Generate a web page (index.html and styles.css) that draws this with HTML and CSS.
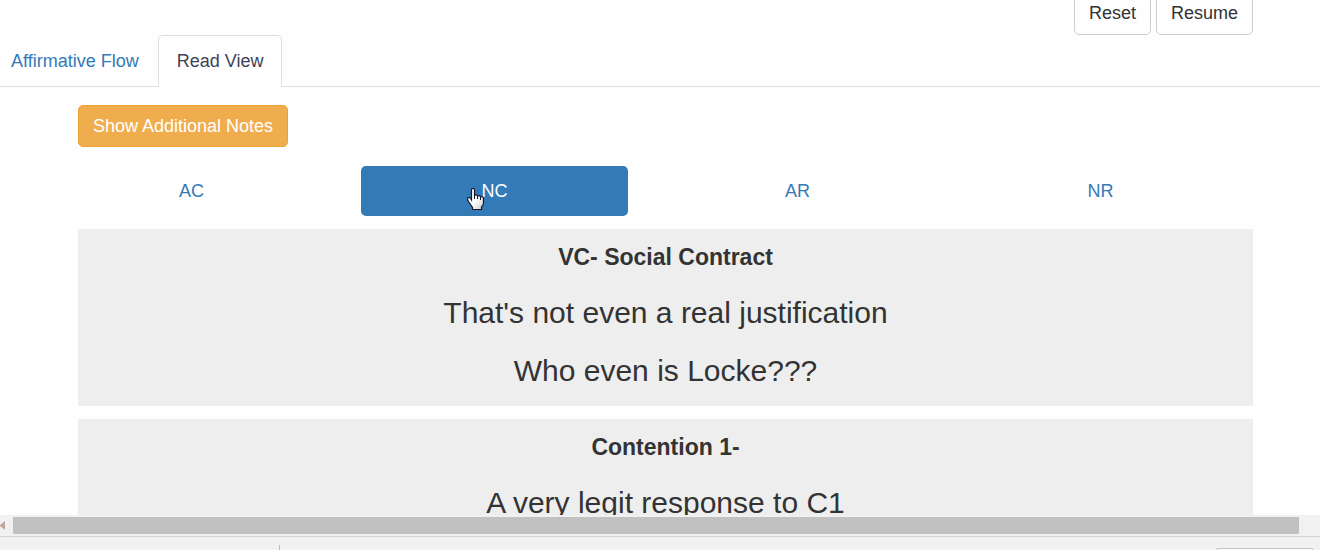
FILE: index.html
```html
<!DOCTYPE html>
<html lang="en">
<head>
<meta charset="utf-8">
<title>Read View</title>
<link rel="stylesheet" href="styles.css">
</head>
<body>
<main class="page">
  <div class="toolbar">
    <button class="btn btn-default" type="button">Reset</button>
    <button class="btn btn-default" type="button">Resume</button>
  </div>
  <nav class="tabs">
    <a class="tab tab-first" href="#flow">Affirmative Flow</a>
    <a class="tab tab-active" href="#read">Read View</a>
  </nav>
  <div class="actions">
    <button class="btn btn-warning" type="button">Show Additional Notes</button>
  </div>
  <nav class="pills">
    <a class="pill" href="#ac">AC</a>
    <a class="pill pill-active" href="#nc">NC
      <svg class="pointer" width="18" height="23" viewBox="0 0 18 23" aria-hidden="true">
        <defs>
          <linearGradient id="hand" x1="0" y1="0" x2="1" y2="1">
            <stop offset="0.5" stop-color="#fff"/>
            <stop offset="1" stop-color="#ccc"/>
          </linearGradient>
        </defs>
        <path d="M4.500 2 Q4.500 .5 6 .5 Q7.500 .5 7.500 2 V7.500 Q9.500 6 10.500 8 Q12.500 7 13.500 8.700 Q16.500 8 16.500 11 V15 Q16.500 17 14.500 19 V21.500 H5.500 V19.500 L1.500 13.500 Q.2 11.500 .7 10 Q2 8.500 3.500 10.500 L4.500 12Z" fill="url(#hand)" stroke="#17172c" stroke-width="1.200"/>
        <path d="M7.500 7 V11 M10.500 8 V11 M13.500 9 V12" fill="none" stroke="#17172c"/>
      </svg>
    </a>
    <a class="pill" href="#ar">AR</a>
    <a class="pill" href="#nr">NR</a>
  </nav>
  <div class="cards">
    <section class="card">
      <h2 class="card-title">VC- Social Contract</h2>
      <p class="card-text">That's not even a real justification</p>
      <p class="card-text">Who even is Locke???</p>
    </section>
    <section class="card">
      <h2 class="card-title">Contention 1-</h2>
      <p class="card-text">A very legit response to C1</p>
    </section>
  </div>
</main>
<div class="scrollbar">
  <svg class="scroll-arrow" width="5" height="9" viewBox="0 0 5 9" aria-hidden="true"><path d="M5 0V9L0 5V4Z" fill="#c0a59b"/></svg>
  <div class="scroll-thumb"></div>
</div>
<footer class="dock">
  <div class="dock-divider"></div>
  <div class="dock-box"></div>
</footer>
</body>
</html>
```

FILE: styles.css
```css
* {
  box-sizing: border-box;
}

body {
  margin: 0;
  height: 100vh;
  display: flex;
  flex-direction: column;
  overflow: hidden;
  background: #fefefe;
  color: #333;
  font-family: "Liberation Sans", Arial, sans-serif;
  font-size: 18px;
  line-height: 26px;
}

.page {
  flex: 1;
  min-height: 0;
  overflow: hidden;
}

.toolbar {
  display: flex;
  justify-content: flex-end;
  gap: 5px;
  margin-top: -8px;
  padding-right: 67px;
}

.btn {
  padding: 7px 14px;
  border: 1px solid #ccc;
  border-radius: 5px;
  background: #fefefe;
  color: #333;
  font: inherit;
}

.btn-default {
  padding-bottom: 8px;
}

.btn-warning {
  background: #f0ad4e;
  border-color: #eea236;
  color: #fff;
}

.tabs {
  display: flex;
  gap: 2px;
  border-bottom: 1px solid #ddd;
}

.tab {
  margin-bottom: -1px;
  padding: 12px 18px;
  border: 1px solid transparent;
  border-radius: 5px 5px 0 0;
  color: #337ab7;
  text-decoration: none;
}

.tab-first {
  padding-right: 16px;
  padding-left: 10px;
}

.tab-active {
  background: #fefefe;
  border-color: #ddd #ddd #fefefe;
  color: #3f4258;
}

.actions {
  display: flex;
  padding: 18px 67px 0 78px;
}

.pills {
  display: grid;
  grid-template-columns: repeat(4, 1fr);
  gap: 36px;
  padding: 19px 86px 13px 58px;
}

.pill {
  position: relative;
  padding: 12px;
  border-radius: 5px;
  color: #337ab7;
  text-align: center;
  text-decoration: none;
}

.pill-active {
  background: #337ab7;
  color: #fff;
}

.pointer {
  position: absolute;
  top: 22px;
  left: calc(50% - 28px);
}

.cards {
  display: grid;
  gap: 13px;
  padding: 0 67px 0 78px;
}

.card {
  padding: 14px 16px 18px;
  background: #eee;
  text-align: center;
}

.card-title {
  margin: 0;
  font-size: 23px;
  line-height: 29px;
}

.card-text {
  margin: 24px 0 0;
  font-size: 30px;
  line-height: 34px;
}

.scrollbar {
  display: flex;
  align-items: center;
  gap: 8px;
  height: 21px;
  padding-right: 21px;
  background: #f1f1f1;
}

.scroll-thumb {
  flex: 1;
  height: 17px;
  background: #c1c1c1;
}

.dock {
  display: flex;
  justify-content: space-between;
  height: 14px;
  padding: 0 7px 0 279px;
  border-top: 1px solid #d2d2d2;
  background: #f1f1f1;
}

.dock-divider {
  width: 1px;
  margin-top: 8px;
  background: #bbb;
}

.dock-box {
  width: 97px;
  margin-top: 11px;
  border: 1px solid #c4c4c4;
  border-bottom: 0;
  border-radius: 3px 3px 0 0;
  background: #fafafa;
}
```
